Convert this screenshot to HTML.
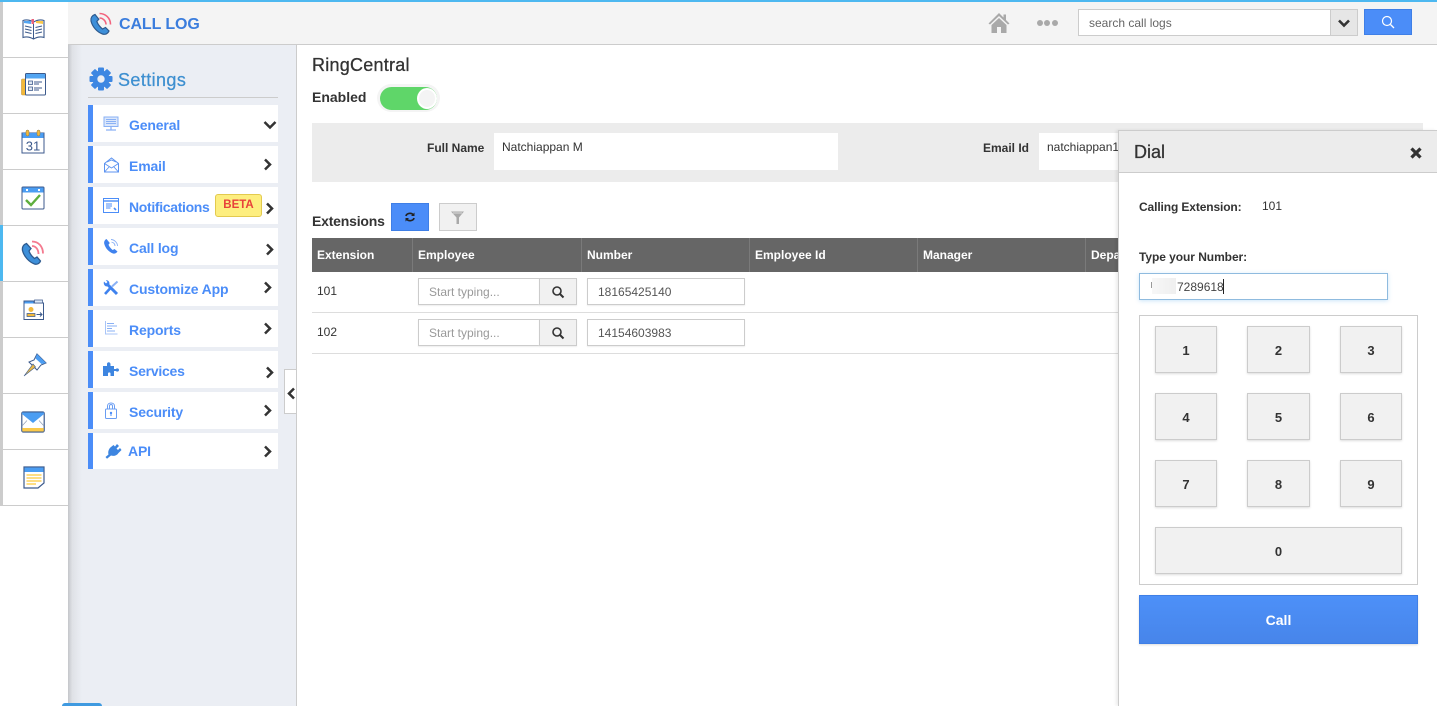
<!DOCTYPE html>
<html><head><meta charset="utf-8"><title>Call Log</title>
<style>
*{box-sizing:border-box}
html,body{margin:0;padding:0;width:1437px;height:706px;overflow:hidden;background:#fff;font-family:"Liberation Sans",Arial,sans-serif;color:#333}
.a{position:absolute}
.t{position:absolute;white-space:nowrap;line-height:16px}
svg{position:absolute;display:block}
.rail{position:absolute;left:3px;width:65px;height:56px;background:#fff;border-bottom:1px solid #ccc}
.m{position:absolute;left:88px;width:190px;background:#fff;border-left:5px solid #4b8df8}
.ml{position:absolute;left:129px;font-size:14px;font-weight:bold;color:#4b8df8;line-height:16px;white-space:nowrap;letter-spacing:-.15px}
.th{position:absolute;top:247px;font-size:12px;font-weight:bold;color:#fff;line-height:16px;white-space:nowrap}
.ts{position:absolute;top:238px;width:1px;height:34px;background:#7a7a7a}
.inp{position:absolute;height:27px;background:#fff;border:1px solid #ccc;box-shadow:0 1px 1px #eee;font-size:12px;line-height:26px;white-space:nowrap}
.k{position:absolute;background:#f1f1f1;border:1px solid #ccc;box-shadow:0 1px 2px #ddd;font-size:13px;font-weight:bold;color:#333;text-align:center;line-height:47px;height:47px}
</style></head><body>

<!-- main bg -->
<div class="a" style="left:68px;top:45px;width:229px;height:661px;background:#ebeef4;border-right:1px solid #ccc"></div>
<div class="a" style="left:68px;top:45px;width:14px;height:661px;background:linear-gradient(90deg,#c4c6ca 0,#dfe1e6 30%,#ebeef4 100%)"></div>

<!-- header -->
<div class="a" style="left:68px;top:2px;width:1369px;height:43px;background:#f4f4f4;border-bottom:1px solid #ccc"></div>
<div class="a" style="left:0;top:0;width:1437px;height:2px;background:#4db8f0"></div>

<svg style="left:89px;top:12px" width="24" height="24" viewBox="0 0 24 24"><path d="M6 2.500C3 3.500 1.500 6 2 9C3.500 15 8 20 13.500 22C16.500 23 19 21.500 20 19L16.500 15.500L13.500 17C11 15 8.800 12 7.800 9.500L9.800 7.200Z" fill="#3d8fd9" stroke="#2d5a8e" stroke-width="1.200"/><path d="M10.500 1.500C16.500 1.500 21.500 6 21.500 12.500M10.500 6C14 6 17 9 17 12.500" fill="none" stroke="#f2637d" stroke-width="1.600"/></svg>
<div class="t" style="left:119px;top:16px;font-size:16px;font-weight:bold;color:#3b7ddd;line-height:18px;letter-spacing:-.1px">CALL LOG</div>

<svg style="left:988px;top:12px" width="22" height="22" viewBox="0 0 22 22"><path d="M11 1L0.500 11.500L2 12.500L11 4L20 12.500L21.500 11.500L18 8V2.500H15.500V5.500Z" fill="#a9a9a9"/><path d="M3.500 13L11 6L18.500 13V21H13V15H9V21H3.500Z" fill="#a9a9a9"/></svg>
<div class="a" style="left:1037px;top:20px;width:6px;height:6px;border-radius:50%;background:#a9a9a9"></div>
<div class="a" style="left:1044px;top:20px;width:6px;height:6px;border-radius:50%;background:#a9a9a9"></div>
<div class="a" style="left:1052px;top:20px;width:6px;height:6px;border-radius:50%;background:#a9a9a9"></div>

<div class="a" style="left:1078px;top:9px;width:253px;height:27px;background:#fff;border:1px solid #ccc"></div>
<div class="t" style="left:1089px;top:15px;font-size:12px;color:#666">search call logs</div>
<div class="a" style="left:1330px;top:9px;width:28px;height:27px;background:#e6e6e6;border:1px solid #ccc"></div>
<svg style="left:1338px;top:19px" width="12" height="9" viewBox="0 0 12 9"><path d="M1 1.500L6 6.500L11 1.500" fill="none" stroke="#333" stroke-width="2.600"/></svg>
<div class="a" style="left:1364px;top:9px;width:48px;height:26px;background:#4b8df8;border:1px solid #3f7fe6"></div>
<svg style="left:1381px;top:15px" width="14" height="14" viewBox="0 0 14 14"><circle cx="6" cy="6" r="4.500" fill="none" stroke="#fff" stroke-width="1.200"/><path d="M9.500 9.500L13 13" stroke="#fff" stroke-width="1.300"/></svg>

<!-- left rail -->
<div class="a" style="left:0;top:2px;width:3px;height:504px;background:#ccc"></div>
<div class="a" style="left:0;top:225px;width:3px;height:56px;background:#4db8f0"></div>
<div class="rail" style="top:2px"></div>
<div class="rail" style="top:58px"></div>
<div class="rail" style="top:114px"></div>
<div class="rail" style="top:170px"></div>
<div class="rail" style="top:226px"></div>
<div class="rail" style="top:282px"></div>
<div class="rail" style="top:338px"></div>
<div class="rail" style="top:394px"></div>
<div class="rail" style="top:450px"></div>

<!-- book -->
<svg style="left:21px;top:18px" width="25" height="23" viewBox="0 0 25 23"><path d="M12.500 4C9 2 5 1.500 2 2.500V19.500C5 18.500 9 19 12.500 21C16 19 20 18.500 23 19.500V2.500C20 1.500 16 2 12.500 4Z" fill="#fff" stroke="#3c5a8c" stroke-width="1.100"/><path d="M12.500 4V21" stroke="#3c5a8c"/><path d="M3 3H10V6L3 5Z" fill="#52a5f2"/><path d="M15 3H22V6L15 5Z" fill="#fbc94a"/><path d="M10.500 1H13V6H10.500Z" fill="#e8647e"/><path d="M4 8L10.500 9.500M4 11L10.500 12.500M4 14L10.500 15.500M14.500 9.500L21 8M14.500 12.500L21 11M14.500 15.500L21 14" stroke="#3c5a8c"/></svg>
<!-- form -->
<svg style="left:21px;top:73px" width="25" height="23" viewBox="0 0 25 23"><rect x="0.500" y="6" width="5" height="16" rx="1" fill="#f3b93b" stroke="#c9983a" stroke-width=".6"/><rect x="4.500" y="0.500" width="20" height="21.500" rx="1" fill="#fff" stroke="#3c5a8c"/><rect x="5" y="1" width="19" height="4.500" fill="#52a5f2"/><path d="M7.500 8h4v3.500h-4zM7.500 14h4v3.500h-4z" fill="#dfe7f2" stroke="#3c5a8c" stroke-width=".8"/><path d="M13 9h8M13 11h5M13 15h8M13 17h5" stroke="#3c5a8c"/></svg>
<!-- calendar -->
<svg style="left:21px;top:129px" width="24" height="25" viewBox="0 0 24 25"><rect x="1" y="4" width="22" height="20" fill="#fff" stroke="#3c5a8c"/><rect x="1.500" y="4" width="21" height="5" fill="#4b9df2"/><rect x="5" y="1" width="3" height="6" rx="1.500" fill="#f3b93b" stroke="#8a7a4a" stroke-width=".5"/><rect x="16" y="1" width="3" height="6" rx="1.500" fill="#f3b93b" stroke="#8a7a4a" stroke-width=".5"/><text x="12" y="21.500" font-family="Liberation Sans,sans-serif" font-size="13" text-anchor="middle" fill="#3c5a8c">31</text></svg>
<!-- check -->
<svg style="left:21px;top:186px" width="24" height="24" viewBox="0 0 24 24"><rect x="1" y="1" width="22" height="22" rx="1" fill="#fff" stroke="#3c5a8c"/><rect x="1.500" y="1.500" width="21" height="5" fill="#4b9df2"/><rect x="5" y="3" width="2" height="2" fill="#fff"/><rect x="17" y="3" width="2" height="2" fill="#fff"/><path d="M5 14L10 19L19 9" fill="none" stroke="#5fae3e" stroke-width="2.400"/></svg>
<!-- phone -->
<svg style="left:21px;top:240px" width="24" height="26" viewBox="0 0 24 26"><path d="M5.500 3.500C2.500 4.500 1 7 1.500 10.500C3 16.500 8 22 13.500 24C16.500 25 18.800 23 19.500 21L16 17L13.500 18.500C11 16.500 8.800 13.500 8 11L10 8.500Z" fill="#3d8fd9" stroke="#2d5a8e" stroke-width="1.300"/><path d="M11 1.500C17.500 1.500 22 6.500 22 13.500M11 6C14.800 6 17.500 9.500 17.500 14" fill="none" stroke="#f47a8f" stroke-width="1.800"/></svg>
<!-- folder person -->
<svg style="left:23px;top:299px" width="22" height="22" viewBox="0 0 22 22"><path d="M1 2H11V4H20.500V20.500H1Z" fill="#fff" stroke="#3c5a8c"/><path d="M1.500 2.500H10.500V4.500H1.500Z" fill="#4b9df2"/><path d="M11.500 1H19.500V4H11.500Z" fill="#dce8f7" stroke="#3c5a8c" stroke-width=".7"/><circle cx="8" cy="10.500" r="2.500" fill="#f3b93b"/><path d="M4 17.500V14.500H12V17.500Z" fill="#f3b93b" stroke="#3c5a8c" stroke-width=".7"/><path d="M13.500 15.500H19M17 13.500L19 15.500L17 17.500" fill="none" stroke="#3c5a8c"/></svg>
<!-- pin -->
<svg style="left:23px;top:353px" width="24" height="24" viewBox="0 0 24 24"><path d="M14 1L23 10L18 12L14 17L6 9L11 7Z" fill="#fff" stroke="#3c5a8c"/><path d="M14 1L23 10L18.500 11L12.500 5.500Z" fill="#4b9df2"/><path d="M10 11L12.500 14L1 23Z" fill="#e6b84a" stroke="#3c5a8c" stroke-width=".6"/></svg>
<!-- mail -->
<svg style="left:21px;top:411px" width="24" height="22" viewBox="0 0 24 22"><rect x="0.800" y="1" width="22.400" height="20" rx="1.500" fill="#fff" stroke="#3c5a8c" stroke-width="1.200"/><path d="M1 1.500H23V3L12 12L1 3Z" fill="#4b9df2"/><rect x="1.300" y="17" width="21.400" height="3.500" fill="#fbc94a"/><path d="M1 15L6 9.500M23 15L18 9.500" stroke="#8a9ab5" stroke-width=".6"/></svg>
<!-- note -->
<svg style="left:23px;top:466px" width="22" height="23" viewBox="0 0 22 23"><path d="M1 1H21V17L15 22H1Z" fill="#fff" stroke="#3c5a8c" stroke-width="1.200"/><rect x="1.500" y="1.500" width="19" height="4.500" fill="#4b9df2"/><path d="M3.500 9H18.500M3.500 12H18.500M3.500 15H18.500M3.500 18H13" stroke="#fdd35c" stroke-width="1.500"/></svg>

<!-- settings -->
<svg style="left:89px;top:67px" width="24" height="24" viewBox="0 0 24 24"><g fill="#3d87e2"><circle cx="12" cy="12" r="8.500"/><rect x="9" y="0.500" width="6" height="23" rx="1"/><rect x="9" y="0.500" width="6" height="23" rx="1" transform="rotate(45 12 12)"/><rect x="9" y="0.500" width="6" height="23" rx="1" transform="rotate(90 12 12)"/><rect x="9" y="0.500" width="6" height="23" rx="1" transform="rotate(135 12 12)"/></g><circle cx="12" cy="12" r="3.700" fill="#ebeef4"/></svg>
<div class="t" style="left:118px;top:69px;font-size:18px;line-height:22px;color:#3d8fd0;letter-spacing:.4px;-webkit-text-stroke:.25px #3d8fd0">Settings</div>
<div class="a" style="left:88px;top:97px;width:190px;height:1px;background:#ccc"></div>

<div class="m" style="top:105px;height:37px"></div>
<div class="m" style="top:146px;height:37px"></div>
<div class="m" style="top:187px;height:37px"></div>
<div class="m" style="top:228px;height:37px"></div>
<div class="m" style="top:269px;height:37px"></div>
<div class="m" style="top:310px;height:37px"></div>
<div class="m" style="top:351px;height:37px"></div>
<div class="m" style="top:392px;height:37px"></div>
<div class="m" style="top:433px;height:36px"></div>

<div class="ml" style="top:117px">General</div>
<div class="ml" style="top:158px">Email</div>
<div class="ml" style="top:199px;letter-spacing:-.33px">Notifications</div>
<div class="ml" style="top:240px">Call log</div>
<div class="ml" style="top:281px">Customize App</div>
<div class="ml" style="top:322px">Reports</div>
<div class="ml" style="top:363px;letter-spacing:-.25px">Services</div>
<div class="ml" style="top:404px">Security</div>
<div class="ml" style="top:443px;left:128px">API</div>

<div class="a" style="left:215px;top:194px;width:47px;height:23px;background:#fdee7f;border:1px solid #e3ca4e;border-radius:3px;font-size:11.500px;font-weight:bold;color:#e8413a;text-align:center;line-height:20px">BETA</div>

<!-- menu icons -->
<svg style="left:103px;top:116px" width="16" height="16" viewBox="0 0 16 16"><rect x="1" y="1" width="14" height="9.500" fill="#dbe7fb" stroke="#8ab1f5"/><path d="M3 3.500H13M3 5.500H13M3 7.500H13" stroke="#8ab1f5"/><path d="M8 10.500V13.500M3 14H13" stroke="#8ab1f5" stroke-width="1.300"/></svg>
<svg style="left:104px;top:157px" width="15" height="16" viewBox="0 0 15 16"><path d="M0.500 6.500L7.500 1L14.500 6.500V15H0.500Z" fill="#fff" stroke="#5c93f0"/><path d="M0.500 6.500L7.500 11L14.500 6.500M0.500 15L5.500 9.500M14.500 15L9.500 9.500M3 5L7.500 3L12 5" fill="none" stroke="#5c93f0" stroke-width=".9"/></svg>
<svg style="left:103px;top:198px" width="16" height="15" viewBox="0 0 16 15"><rect x="0.500" y="0.500" width="15" height="14" fill="#fff" stroke="#4b8df8"/><path d="M0.500 3H15.500" stroke="#4b8df8" stroke-width="1.400"/><path d="M3 6H9M3 8H9M3 10H7.500" stroke="#4b8df8"/><path d="M11 10L13 12" stroke="#4b8df8" stroke-width="1.600"/></svg>
<svg style="left:103px;top:238px" width="17" height="17" viewBox="0 0 17 17"><path d="M3.500 1C1.500 2 .8 4 1.300 6C2.500 10.500 6 14 10 15.500C12 16 13.500 15 14.500 13.500L11.500 11L9.700 12C8 10.800 6.200 8.500 5.500 6.800L6.800 5Z" fill="#3f82ee"/><path d="M8 1.500C11 1.500 14.500 4.500 14.500 8M8.500 4.200C10.500 4.200 12 6 12 8" fill="none" stroke="#8ab1f5" stroke-width=".9"/></svg>
<svg style="left:103px;top:280px" width="16" height="16" viewBox="0 0 16 16"><path d="M4.500 4.500L14 14" stroke="#3f82ee" stroke-width="3"/><path d="M1 1.500L3 3.500L4.500 2L2.800 0.300C5 -.2 7 1.800 6.300 4.300L4.300 6.300C2 7 0 4 1 1.500Z" fill="#3f82ee"/><path d="M7 8.500L2 14" stroke="#3f82ee" stroke-width="2.600"/><path d="M9 6.500L14.500 1.500" stroke="#8ab1f5" stroke-width="2"/></svg>
<svg style="left:105px;top:321px" width="13" height="14" viewBox="0 0 13 14"><path d="M0.500 0V13H12.500" fill="none" stroke="#a9c5f7"/><path d="M2 2.500H9M2 5H12M2 7.500H7M2 10H10" stroke="#8ab1f5"/></svg>
<svg style="left:103px;top:361px" width="16" height="15" viewBox="0 0 16 15"><path d="M0 5H4V3C4 1 7 0.500 7.500 3V5H11V8H13C13.500 7 16 7 16 9C16 11 13.500 11 13 10H11V15H7.500V12.500C7.500 11 5 11 5 12.500V15H0Z" fill="#3d85e0"/></svg>
<svg style="left:105px;top:402px" width="12" height="17" viewBox="0 0 12 17"><rect x="0.500" y="7" width="11" height="9.500" rx="1" fill="#fff" stroke="#6a9df2"/><path d="M2.500 7V4C2.500 0 9.500 0 9.500 4V7M4.500 7V4C4.500 2 7.500 2 7.500 4V7" fill="none" stroke="#6a9df2"/><circle cx="6" cy="11" r="1.200" fill="#4b8df8"/><path d="M6 11V14" stroke="#4b8df8"/></svg>
<svg style="left:105px;top:443px" width="17" height="16" viewBox="0 0 17 16"><path d="M0.500 14L3.500 11.500C2.800 9 3.500 6 6 4L8.500 2L10 3.500L12 1L14 3L11.500 5.500L13 7L15 5L16.500 7L13.500 10C12 12.500 9 13.500 6 12.500L2 15.800Z" fill="#3d85e0"/></svg>

<!-- chevrons -->
<svg style="left:263px;top:120px" width="14" height="10" viewBox="0 0 14 10"><path d="M1.500 2L7 7.500L12.500 2" fill="none" stroke="#333" stroke-width="2.500"/></svg>
<svg style="left:263px;top:158px" width="9" height="13" viewBox="0 0 9 13"><path d="M2 1.500L7 6.500L2 11.500" fill="none" stroke="#333" stroke-width="2.500"/></svg>
<svg style="left:265px;top:202px" width="9" height="13" viewBox="0 0 9 13"><path d="M2 1.500L7 6.500L2 11.500" fill="none" stroke="#333" stroke-width="2.500"/></svg>
<svg style="left:265px;top:243px" width="9" height="13" viewBox="0 0 9 13"><path d="M2 1.500L7 6.500L2 11.500" fill="none" stroke="#333" stroke-width="2.500"/></svg>
<svg style="left:263px;top:281px" width="9" height="13" viewBox="0 0 9 13"><path d="M2 1.500L7 6.500L2 11.500" fill="none" stroke="#333" stroke-width="2.500"/></svg>
<svg style="left:263px;top:322px" width="9" height="13" viewBox="0 0 9 13"><path d="M2 1.500L7 6.500L2 11.500" fill="none" stroke="#333" stroke-width="2.500"/></svg>
<svg style="left:265px;top:366px" width="9" height="13" viewBox="0 0 9 13"><path d="M2 1.500L7 6.500L2 11.500" fill="none" stroke="#333" stroke-width="2.500"/></svg>
<svg style="left:263px;top:404px" width="9" height="13" viewBox="0 0 9 13"><path d="M2 1.500L7 6.500L2 11.500" fill="none" stroke="#333" stroke-width="2.500"/></svg>
<svg style="left:263px;top:445px" width="9" height="13" viewBox="0 0 9 13"><path d="M2 1.500L7 6.500L2 11.500" fill="none" stroke="#333" stroke-width="2.500"/></svg>

<div class="a" style="left:284px;top:369px;width:12px;height:45px;background:#fff;border:1px solid #ccc;border-right:0"></div>
<svg style="left:287px;top:387px" width="9" height="13" viewBox="0 0 9 13"><path d="M7 1.500L2 6.500L7 11.500" fill="none" stroke="#333" stroke-width="2.500"/></svg>

<div class="a" style="left:62px;top:703px;width:40px;height:3px;background:#3f9ae0;border-radius:4px 4px 0 0"></div>

<!-- content -->
<div class="t" style="left:312px;top:55px;font-size:18px;line-height:21px;color:#333;letter-spacing:.25px;-webkit-text-stroke:.3px #333">RingCentral</div>
<div class="t" style="left:312px;top:89px;font-size:14px;font-weight:bold;color:#333">Enabled</div>
<div class="a" style="left:377px;top:84px;width:63px;height:28px;border-radius:14px;background:#f4f4f4"></div>
<div class="a" style="left:380px;top:87px;width:57px;height:23px;border-radius:12px;background:#5fd669"></div>
<div class="a" style="left:417px;top:88px;width:20px;height:21px;border-radius:50%;background:#f4f4f4;border:2px solid #fff"></div>

<div class="a" style="left:312px;top:123px;width:1111px;height:59px;background:#ececec"></div>
<div class="t" style="left:427px;top:140px;font-size:12px;font-weight:bold;color:#333">Full Name</div>
<div class="a" style="left:494px;top:133px;width:344px;height:37px;background:#fff"></div>
<div class="t" style="left:502px;top:139px;font-size:12px;color:#333">Natchiappan M</div>
<div class="t" style="left:983px;top:140px;font-size:12px;font-weight:bold;color:#333">Email Id</div>
<div class="a" style="left:1039px;top:133px;width:100px;height:37px;background:#fff"></div>
<div class="t" style="left:1047px;top:139px;font-size:12px;color:#333">natchiappan1</div>

<div class="t" style="left:312px;top:213px;font-size:14px;font-weight:bold;color:#333;letter-spacing:-.2px">Extensions</div>
<div class="a" style="left:391px;top:203px;width:38px;height:28px;background:#4b8df8;border:1px solid #3f7fe6"></div>
<svg style="left:405px;top:212px" width="10" height="10" viewBox="0 0 10 10"><path d="M1 4C1.500 1.500 6 0 8.500 3M9 6C8.500 8.500 4 10 1.500 7" fill="none" stroke="#222" stroke-width="1.700"/><path d="M9.500 .5V4H6ZM.5 9.500V6H4Z" fill="#222"/></svg>
<div class="a" style="left:439px;top:203px;width:38px;height:28px;background:#f1f1f1;border:1px solid #ccc"></div>
<svg style="left:450px;top:210px" width="15" height="15" viewBox="0 0 15 15"><path d="M1 1.500H14L9 7.500V14H6.500V7.500Z" fill="#a9a9a9"/><path d="M3 3H12" stroke="#e8e8e8" stroke-width=".8"/></svg>

<!-- table -->
<div class="a" style="left:312px;top:238px;width:806px;height:34px;background:#666"></div>
<div class="ts" style="left:412px"></div>
<div class="ts" style="left:581px"></div>
<div class="ts" style="left:749px"></div>
<div class="ts" style="left:917px"></div>
<div class="ts" style="left:1085px"></div>
<div class="th" style="left:317px">Extension</div>
<div class="th" style="left:418px">Employee</div>
<div class="th" style="left:587px">Number</div>
<div class="th" style="left:755px">Employee Id</div>
<div class="th" style="left:923px">Manager</div>
<div class="th" style="left:1091px;width:27px;overflow:hidden">Department</div>

<div class="t" style="left:317px;top:283px;font-size:12px">101</div>
<div class="inp" style="left:418px;top:278px;width:122px;padding-left:10px;color:#999">Start typing...</div>
<div class="inp" style="left:539px;top:278px;width:38px;background:#f1f1f1"></div>
<svg style="left:551px;top:285px" width="14" height="14" viewBox="0 0 14 14"><circle cx="6" cy="6" r="4" fill="none" stroke="#333" stroke-width="1.600"/><path d="M9 9L12.500 12.500" stroke="#333" stroke-width="2"/></svg>
<div class="inp" style="left:587px;top:278px;width:158px;padding-left:10px;color:#555">18165425140</div>
<div class="a" style="left:312px;top:312px;width:806px;height:1px;background:#ddd"></div>

<div class="t" style="left:317px;top:324px;font-size:12px">102</div>
<div class="inp" style="left:418px;top:319px;width:122px;padding-left:10px;color:#999">Start typing...</div>
<div class="inp" style="left:539px;top:319px;width:38px;background:#f1f1f1"></div>
<svg style="left:551px;top:326px" width="14" height="14" viewBox="0 0 14 14"><circle cx="6" cy="6" r="4" fill="none" stroke="#333" stroke-width="1.600"/><path d="M9 9L12.500 12.500" stroke="#333" stroke-width="2"/></svg>
<div class="inp" style="left:587px;top:319px;width:158px;padding-left:10px;color:#555">14154603983</div>
<div class="a" style="left:312px;top:353px;width:806px;height:1px;background:#ddd"></div>

<!-- dial panel -->
<div class="a" style="left:1118px;top:130px;width:319px;height:576px;background:#fff;border-left:1px solid #ccc;border-top:1px solid #ccc;box-shadow:-2px 0 3px rgba(0,0,0,.08)"></div>
<div class="a" style="left:1119px;top:131px;width:318px;height:42px;background:#ececec;border-bottom:1px solid #ccc"></div>
<div class="t" style="left:1134px;top:142px;font-size:18px;line-height:21px;color:#333;-webkit-text-stroke:.3px #333">Dial</div>
<svg style="left:1409px;top:146px" width="14" height="14" viewBox="0 0 14 14"><path d="M2.500 2.500L11.500 11.500M11.500 2.500L2.500 11.500" stroke="#333" stroke-width="3.200"/></svg>
<div class="t" style="left:1139px;top:199px;font-size:12px;font-weight:bold;color:#333;letter-spacing:-.12px">Calling Extension:</div>
<div class="t" style="left:1262px;top:198px;font-size:12px;color:#333">101</div>
<div class="t" style="left:1139px;top:249px;font-size:12px;font-weight:bold;color:#333;letter-spacing:-.06px">Type your Number:</div>
<div class="a" style="left:1139px;top:273px;width:249px;height:27px;background:#fff;border:1px solid #8fbbdf;box-shadow:0 1px 4px rgba(82,168,236,.3)"></div>
<div class="a" style="left:1151px;top:282px;width:1px;height:6px;background:#999"></div>
<div class="a" style="left:1152px;top:278px;width:24px;height:16px;background:linear-gradient(90deg,#f7f7f7,#efefef)"></div>
<div class="t" style="left:1177px;top:279px;font-size:12px;color:#444">7289618</div>
<div class="a" style="left:1223px;top:279px;width:1px;height:15px;background:#222"></div>

<div class="a" style="left:1139px;top:315px;width:279px;height:270px;background:#fff;border:1px solid #ccc"></div>
<div class="k" style="left:1155px;top:326px;width:62px">1</div>
<div class="k" style="left:1247px;top:326px;width:63px">2</div>
<div class="k" style="left:1340px;top:326px;width:62px">3</div>
<div class="k" style="left:1155px;top:393px;width:62px">4</div>
<div class="k" style="left:1247px;top:393px;width:63px">5</div>
<div class="k" style="left:1340px;top:393px;width:62px">6</div>
<div class="k" style="left:1155px;top:460px;width:62px">7</div>
<div class="k" style="left:1247px;top:460px;width:63px">8</div>
<div class="k" style="left:1340px;top:460px;width:62px">9</div>
<div class="k" style="left:1155px;top:527px;width:247px">0</div>
<div class="a" style="left:1139px;top:595px;width:279px;height:49px;background:linear-gradient(#4d90f8,#4785ea);border:1px solid #3f7fe6;box-shadow:0 1px 2px #ddd;color:#fff;font-size:14px;font-weight:bold;text-align:center;line-height:48px">Call</div>

</body></html>
